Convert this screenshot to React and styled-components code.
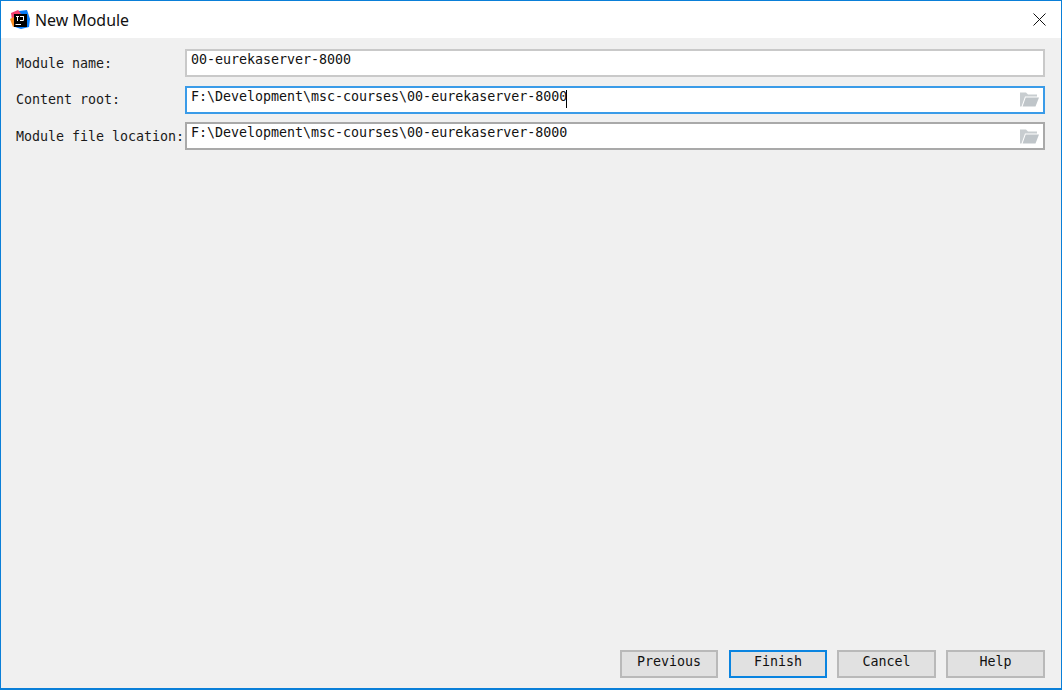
import styled, { createGlobalStyle } from "styled-components";

const GlobalStyle = createGlobalStyle`
  html, body {
    margin: 0;
    padding: 0;
    background: #f0f0f0;
  }
`;

const mono = `"DejaVu Sans Mono", "Liberation Mono", monospace`;

const fieldBorders = {
  idle: "#c9c9c9",
  focused: "#3a9be8",
  normal: "#a9a9a9",
};

const AppLogo = () => (
  <svg width="20" height="20" viewBox="0 0 20 20">
    <path d="M1 3 L8 0 L11 3 L9 12 L4 16 L2 10 Z" fill="#f2406f" />
    <path d="M0 9 L4 7 L7 15 L3 17 Z" fill="#f98b1e" />
    <path d="M9 1 L17 0 L20 9 L19 17 L11 19 L5 17 Z" fill="#087cfa" />
    <path d="M3 4 L9 1 L11 4 L5 8 Z" fill="#fc3f6c" />
    <rect x="4" y="4" width="13" height="13" fill="#000" />
    <rect x="5.5" y="14" width="5.5" height="1" fill="#fff" />
    <path d="M6 6 H9 V7 H8 V11 H7 V7 H6 Z M10 6 H14 V10 Q14 11 13 11 H10 V10 H13 V7 H10 Z" fill="#fff" />
  </svg>
);

const CloseIcon = () => (
  <svg width="13" height="13" viewBox="0 0 13 13">
    <path d="M0.5 0.5 L12.5 12.5 M12.5 0.5 L0.5 12.5" stroke="#111" strokeWidth="1" fill="none" />
  </svg>
);

const FolderIcon = () => (
  <svg width="19" height="15" viewBox="0 0 19 15">
    <path d="M0 0.5 H6 L8 2.5 H17 V4.5 H5 L1.5 14.5 H0 Z" fill="#c8cdd0" />
    <path d="M5.7 5.5 H19 L15.5 14.5 H2.6 Z" fill="#bfc5c9" />
  </svg>
);

export default function App() {
  return (
    <>
      <GlobalStyle />
      <Window>
        <TitleBar>
          <AppLogo />
          <Title>New Module</Title>
          <CloseButton>
            <CloseIcon />
          </CloseButton>
        </TitleBar>
        <Body>
          <Form>
            <Label>Module name:</Label>
            <Field $tone="idle">
              <FieldText>00-eurekaserver-8000</FieldText>
            </Field>
            <Label>Content root:</Label>
            <Field $tone="focused">
              <FieldText>
                F:\Development\msc-courses\00-eurekaserver-8000
                <Caret />
              </FieldText>
              <FolderIcon />
            </Field>
            <Label>Module file location:</Label>
            <Field $tone="normal">
              <FieldText>F:\Development\msc-courses\00-eurekaserver-8000</FieldText>
              <FolderIcon />
            </Field>
          </Form>
          <Footer>
            <DialogButton>Previous</DialogButton>
            <DialogButton $primary>Finish</DialogButton>
            <DialogButton $wide>Cancel</DialogButton>
            <DialogButton $wide>Help</DialogButton>
          </Footer>
        </Body>
      </Window>
    </>
  );
}

const Window = styled.div`
  box-sizing: border-box;
  width: 1062px;
  height: 690px;
  border: 1px solid #0a7fd8;
  border-bottom-width: 2px;
  display: flex;
  flex-direction: column;
  overflow: hidden;
`;

const TitleBar = styled.div`
  box-sizing: border-box;
  height: 37px;
  flex: none;
  background: #fff;
  display: flex;
  align-items: center;
  padding: 0 15px 0 9px;
`;

const Title = styled.div`
  font: 15.9px "Noto Sans", "Open Sans", sans-serif;
  color: #111;
  margin-left: 5px;
  flex: 1;
`;

const CloseButton = styled.div`
  display: flex;
`;

const Body = styled.div`
  flex: 1;
  background: #f0f0f0;
  display: flex;
  flex-direction: column;
  justify-content: space-between;
  padding: 11px 16px 10px 15px;
`;

const Form = styled.div`
  display: grid;
  grid-template-columns: 169px 1fr;
  grid-auto-rows: 28px;
  row-gap: 8.5px;
`;

const Label = styled.div`
  font: 13.33px ${mono};
  letter-spacing: -0.02px;
  color: #1a1a1a;
  line-height: 28px;
  padding-top: 0.5px;
`;

const Field = styled.div`
  box-sizing: border-box;
  height: 28px;
  background: #fff;
  border: 2px solid ${(p) => fieldBorders[p.$tone]};
  display: flex;
  align-items: center;
  justify-content: space-between;
  padding: 0 4px 0 4px;
`;

const FieldText = styled.div`
  font: 13.33px ${mono};
  letter-spacing: -0.02px;
  color: #111;
  line-height: 16px;
  align-self: flex-start;
  margin-top: 1px;
  position: relative;
  white-space: pre;
`;

const Caret = styled.span`
  position: absolute;
  right: 0;
  top: 1px;
  width: 1px;
  height: 18px;
  background: #000;
`;

const Footer = styled.div`
  display: flex;
  justify-content: flex-end;
  gap: 10px;
`;

const DialogButton = styled.div`
  box-sizing: border-box;
  width: ${(p) => (p.$wide ? "99px" : "98px")};
  height: 28px;
  margin-left: ${(p) => (p.$primary ? "1px" : "0")};
  background: #e1e1e1;
  border: 2px solid ${(p) => (p.$primary ? "#0a84e0" : "#b9b9b9")};
  font: 13.33px ${mono};
  color: #111;
  text-align: center;
  line-height: 20px;
`;
